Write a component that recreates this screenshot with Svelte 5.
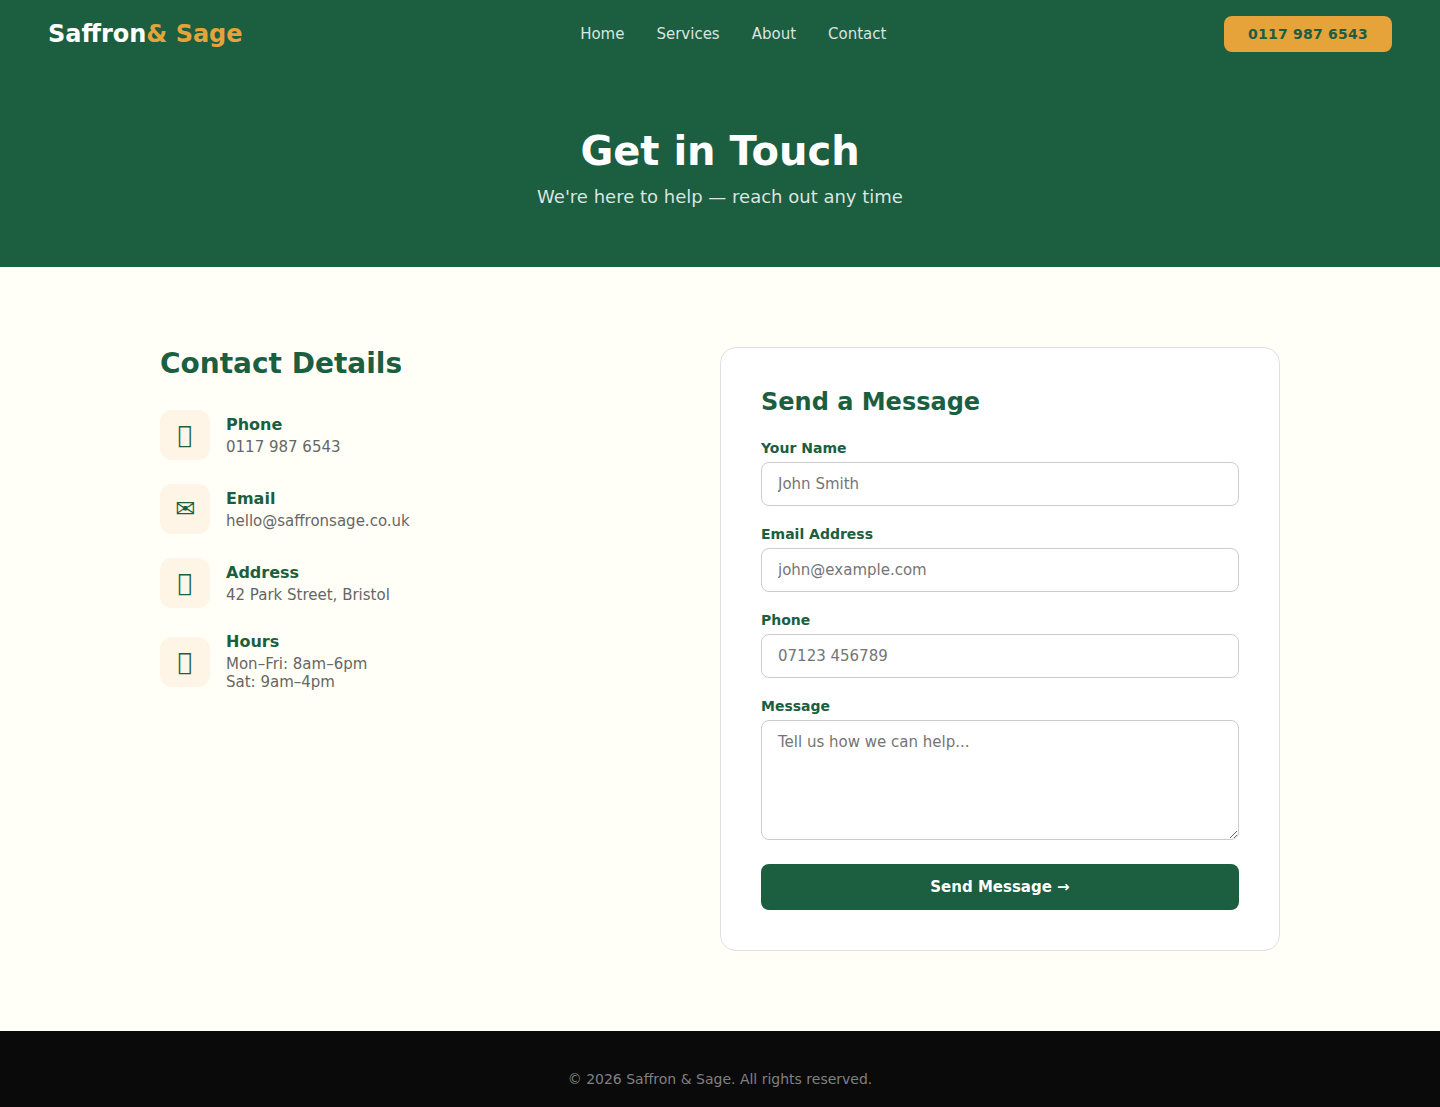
<script>
  const links = ['Home', 'Services', 'About', 'Contact'];
  // Private-use code point: renders as the font's empty box
  const box = '\u{F0000}';
  const details = [
    { icon: box, title: 'Phone', lines: ['0117 987 6543'] },
    { icon: '\u2709', title: 'Email', lines: ['hello@saffronsage.co.uk'] },
    { icon: box, title: 'Address', lines: ['42 Park Street, Bristol'] },
    { icon: box, title: 'Hours', lines: ['Mon–Fri: 8am–6pm', 'Sat: 9am–4pm'] }
  ];
  const fields = [
    { id: 'name', label: 'Your Name', type: 'text', placeholder: 'John Smith' },
    { id: 'email', label: 'Email Address', type: 'email', placeholder: 'john@example.com' },
    { id: 'phone', label: 'Phone', type: 'tel', placeholder: '07123 456789' }
  ];
</script>

<nav>
  <div class="logo">Saffron<span>& Sage</span></div>
  <div class="links">
    {#each links as link}<a href="#top">{link}</a>{/each}
  </div>
  <button class="call">0117 987 6543</button>
</nav>

<header>
  <h1>Get in Touch</h1>
  <p>We're here to help — reach out any time</p>
</header>

<main>
  <section class="info">
    <h2>Contact Details</h2>
    {#each details as item}
      <div class="item">
        <div class="icon">{item.icon}</div>
        <div>
          <h4>{item.title}</h4>
          <p>{#each item.lines as line, i}{#if i}<br />{/if}{line}{/each}</p>
        </div>
      </div>
    {/each}
  </section>

  <form class="card">
    <h3>Send a Message</h3>
    {#each fields as f}
      <div class="group">
        <label for={f.id}>{f.label}</label>
        <input id={f.id} type={f.type} placeholder={f.placeholder} />
      </div>
    {/each}
    <div class="group">
      <label for="message">Message</label>
      <textarea id="message" placeholder="Tell us how we can help..."></textarea>
    </div>
    <button class="send" type="button">Send Message →</button>
  </form>
</main>

<footer><p>© 2026 Saffron & Sage. All rights reserved.</p></footer>

<style>
  :global(*) { margin: 0; padding: 0; box-sizing: border-box; }
  :global(body) {
    font-family: 'DejaVu Sans', sans-serif;
    background: #fffff8;
    color: #1b5e40;
  }
  nav {
    display: flex;
    justify-content: space-between;
    align-items: center;
    padding: 16px 48px;
    background: #1b5e40;
  }
  .logo { font-size: 24px; font-weight: 700; color: #fff; }
  .logo span { color: #e5a33a; }
  .links { display: flex; gap: 32px; }
  .links a { color: rgba(255, 255, 255, 0.85); font-size: 15px; line-height: 18px; text-decoration: none; }
  button { border: none; font-family: inherit; font-weight: 700; border-radius: 8px; }
  .call {
    background: #e5a33a;
    color: #1b5e40;
    height: 36px;
    padding: 0 24px;
    font-size: 14px;
    letter-spacing: 0.238px;
  }
  header { background: #1b5e40; text-align: center; padding: 60px 48px; height: 199px; }
  h1 { font-size: 40px; line-height: 47px; color: #fff; margin-bottom: 11px; }
  header p { font-size: 18px; line-height: 21px; color: rgba(255, 255, 255, 0.85); }
  main {
    display: grid;
    grid-template-columns: 500px 560px;
    gap: 60px;
    width: 1120px;
    margin: 0 auto;
    padding: 80px 0;
  }
  h2 { font-size: 28px; line-height: 33px; margin-bottom: 30px; }
  .item { display: flex; align-items: center; gap: 16px; margin-bottom: 24px; }
  .icon {
    width: 50px;
    height: 50px;
    border-radius: 12px;
    background: #fef5e7;
    display: flex;
    align-items: center;
    justify-content: center;
    font-size: 24px;
  }
  h4 { font-size: 16px; line-height: 19px; margin-bottom: 4px; }
  .item p { font-size: 15px; line-height: 18px; color: #666; }
  .card { background: #fff; border: 1px solid #e0e0e0; border-radius: 16px; padding: 40px; height: 604px; }
  h3 { font-size: 24px; line-height: 28px; margin-bottom: 24px; }
  .group { margin-bottom: 20px; }
  label { display: block; font-size: 14px; line-height: 16px; font-weight: 600; margin-bottom: 6px; }
  input, textarea {
    display: block;
    width: 100%;
    border: 1px solid #ccc;
    border-radius: 8px;
    padding: 12px 16px;
    font-family: inherit;
    font-size: 15px;
    background: #fff;
  }
  input { height: 44px; }
  textarea { height: 120px; resize: vertical; }
  .send { width: 100%; height: 46px; margin-top: 4px; background: #1b5e40; color: #fff; font-size: 15px; }
  footer { background: #0a0a0a; height: 76px; padding: 40px 48px 20px; text-align: center; }
  footer p { font-size: 14px; line-height: 16px; color: #808080; }
</style>
